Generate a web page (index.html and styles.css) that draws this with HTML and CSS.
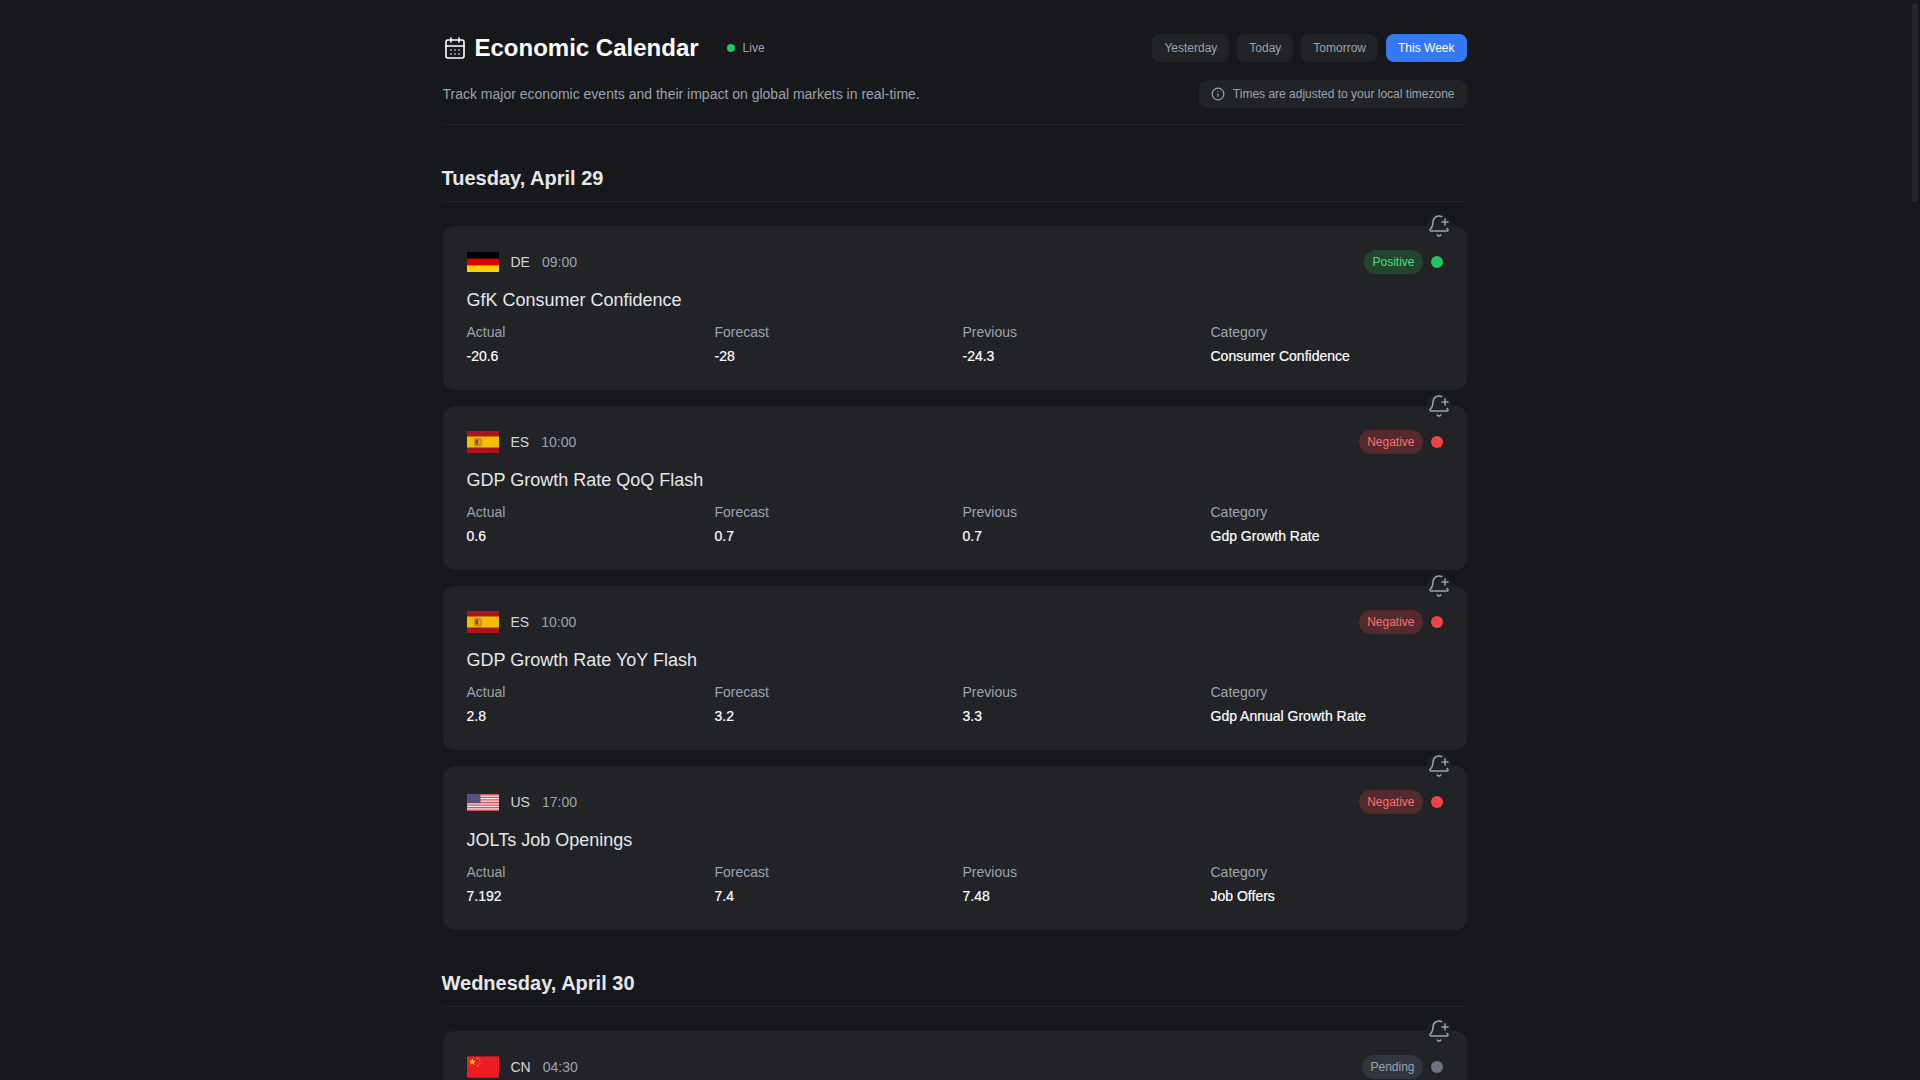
FILE: index.html
```html
<!DOCTYPE html>
<html lang="en">
<head>
<meta charset="utf-8">
<title>Economic Calendar</title>
<link rel="stylesheet" href="styles.css">
</head>
<body>
<svg class="sprites" aria-hidden="true">
  <symbol id="bell" viewBox="0 0 24 24" fill="none" stroke="currentColor" stroke-width="1.5" stroke-linecap="round" stroke-linejoin="round">
    <path d="M10.268 21a2 2 0 0 0 3.464 0"/><path d="M15 8h6"/><path d="M18 5v6"/><path d="M20.002 14.464a9 9 0 0 0 .738.863A1 1 0 0 1 20 17H4a1 1 0 0 1-.74-1.673C4.59 13.956 6 12.499 6 8a6 6 0 0 1 8.75-5.332"/>
  </symbol>
  <symbol id="flag-es" viewBox="0 0 32 22">
    <rect width="32" height="22" fill="#aa151b"/><rect y="5.5" width="32" height="11" fill="#f1bf00"/>
    <rect x="7" y="7" width="8" height="8.5" rx="2.5" fill="#c8872a"/><rect x="8.5" y="8.5" width="2.6" height="5" rx="1" fill="#ad3a22"/><rect x="11.2" y="8.5" width="2.4" height="5" rx="1" fill="#d9a020"/>
  </symbol>
</svg>
<div class="page">
  <main class="wrap">
    <header class="head">
      <div class="head-row">
        <div class="title-group">
          <svg class="cal-icon" viewBox="0 0 24 24" fill="none" stroke="currentColor" stroke-width="1.6" stroke-linecap="round" stroke-linejoin="round">
            <path d="M8 2v4"/><path d="M16 2v4"/><rect width="18" height="18" x="3" y="4" rx="2"/><path d="M3 10h18"/><path d="M8 14h.01"/><path d="M12 14h.01"/><path d="M16 14h.01"/><path d="M8 18h.01"/><path d="M12 18h.01"/><path d="M16 18h.01"/>
          </svg>
          <h1 class="title">Economic Calendar</h1>
          <span class="live"><i class="live-dot"></i>Live</span>
        </div>
        <nav class="tabs">
          <button class="tab">Yesterday</button>
          <button class="tab">Today</button>
          <button class="tab">Tomorrow</button>
          <button class="tab tab-active">This Week</button>
        </nav>
      </div>
      <div class="head-row head-row-second">
        <p class="sub">Track major economic events and their impact on global markets in real-time.</p>
        <div class="tz">
          <svg class="tz-icon" viewBox="0 0 24 24" fill="none" stroke="currentColor" stroke-width="2" stroke-linecap="round" stroke-linejoin="round"><circle cx="12" cy="12" r="10"/><path d="M12 16v-4"/><path d="M12 8h.01"/></svg>
          <span>Times are adjusted to your local timezone</span>
        </div>
      </div>
    </header>

    <section class="day">
      <h2 class="day-title">Tuesday, April 29</h2>
      <div class="cards">
        <article class="card">
          <button class="bell"><svg class="bell-icon"><use href="#bell"/></svg></button>
          <div class="card-top">
            <div class="meta">
              <svg class="flag flag-de" viewBox="0 0 32 20"><rect width="32" height="6.67" fill="#000"/><rect y="6.67" width="32" height="6.67" fill="#d00"/><rect y="13.33" width="32" height="6.67" fill="#ffce00"/></svg>
              <span class="code">DE</span><span class="time">09:00</span>
            </div>
            <div class="status"><span class="badge badge-pos">Positive</span><i class="dot dot-pos"></i></div>
          </div>
          <h3 class="event">GfK Consumer Confidence</h3>
          <dl class="stats">
            <div><dt>Actual</dt><dd>-20.6</dd></div>
            <div><dt>Forecast</dt><dd>-28</dd></div>
            <div><dt>Previous</dt><dd>-24.3</dd></div>
            <div><dt>Category</dt><dd>Consumer Confidence</dd></div>
          </dl>
        </article>

        <article class="card">
          <button class="bell"><svg class="bell-icon"><use href="#bell"/></svg></button>
          <div class="card-top">
            <div class="meta">
              <svg class="flag flag-es"><use href="#flag-es"/></svg>
              <span class="code">ES</span><span class="time">10:00</span>
            </div>
            <div class="status"><span class="badge badge-neg">Negative</span><i class="dot dot-neg"></i></div>
          </div>
          <h3 class="event">GDP Growth Rate QoQ Flash</h3>
          <dl class="stats">
            <div><dt>Actual</dt><dd>0.6</dd></div>
            <div><dt>Forecast</dt><dd>0.7</dd></div>
            <div><dt>Previous</dt><dd>0.7</dd></div>
            <div><dt>Category</dt><dd>Gdp Growth Rate</dd></div>
          </dl>
        </article>

        <article class="card">
          <button class="bell"><svg class="bell-icon"><use href="#bell"/></svg></button>
          <div class="card-top">
            <div class="meta">
              <svg class="flag flag-es"><use href="#flag-es"/></svg>
              <span class="code">ES</span><span class="time">10:00</span>
            </div>
            <div class="status"><span class="badge badge-neg">Negative</span><i class="dot dot-neg"></i></div>
          </div>
          <h3 class="event">GDP Growth Rate YoY Flash</h3>
          <dl class="stats">
            <div><dt>Actual</dt><dd>2.8</dd></div>
            <div><dt>Forecast</dt><dd>3.2</dd></div>
            <div><dt>Previous</dt><dd>3.3</dd></div>
            <div><dt>Category</dt><dd>Gdp Annual Growth Rate</dd></div>
          </dl>
        </article>

        <article class="card">
          <button class="bell"><svg class="bell-icon"><use href="#bell"/></svg></button>
          <div class="card-top">
            <div class="meta">
              <svg class="flag flag-us" viewBox="0 0 38 20">
                <rect width="38" height="20" fill="#f3e4e4"/>
                <path d="M0 .77h38M0 3.85h38M0 6.92h38M0 10h38M0 13.08h38M0 16.15h38M0 19.23h38" stroke="#d4545f" stroke-width="1.54"/>
                <rect width="16" height="10.8" fill="#55507f"/>
              </svg>
              <span class="code">US</span><span class="time">17:00</span>
            </div>
            <div class="status"><span class="badge badge-neg">Negative</span><i class="dot dot-neg"></i></div>
          </div>
          <h3 class="event">JOLTs Job Openings</h3>
          <dl class="stats">
            <div><dt>Actual</dt><dd>7.192</dd></div>
            <div><dt>Forecast</dt><dd>7.4</dd></div>
            <div><dt>Previous</dt><dd>7.48</dd></div>
            <div><dt>Category</dt><dd>Job Offers</dd></div>
          </dl>
        </article>
      </div>
    </section>

    <section class="day">
      <h2 class="day-title">Wednesday, April 30</h2>
      <div class="cards">
        <article class="card">
          <button class="bell"><svg class="bell-icon"><use href="#bell"/></svg></button>
          <div class="card-top">
            <div class="meta">
              <svg class="flag flag-cn" viewBox="0 0 30 20">
                <rect width="30" height="20" fill="#ee1c25"/>
                <polygon fill="#ffde00" points="5,2 5.9,4.1 8,4.3 6.4,5.7 6.9,7.9 5,6.7 3.1,7.9 3.6,5.7 2,4.3 4.1,4.1"/>
                <circle cx="10" cy="2" r=".6" fill="#ffde00"/><circle cx="12" cy="4" r=".6" fill="#ffde00"/><circle cx="12" cy="7" r=".6" fill="#ffde00"/><circle cx="10" cy="9" r=".6" fill="#ffde00"/>
              </svg>
              <span class="code">CN</span><span class="time">04:30</span>
            </div>
            <div class="status"><span class="badge badge-pend">Pending</span><i class="dot dot-pend"></i></div>
          </div>
        </article>
      </div>
    </section>
  </main>
</div>
<div class="scroll-thumb"></div>
</body>
</html>
```

FILE: styles.css
```css
* { box-sizing: border-box; }
html, body { height: 100%; margin: 0; overflow: hidden; }
body {
  background: #16181c;
  color: #e5e7eb;
  font-family: "Liberation Sans", Arial, sans-serif;
}
.sprites { display: none; }
.page { height: 100%; padding-right: 11px; overflow: hidden; }
.wrap { width: 1024px; margin: 0 auto; padding-top: 32px; }

.head { padding-bottom: 16px; border-bottom: 1px solid #212328; }
.head-row { display: flex; align-items: center; justify-content: space-between; }
.head-row-second { margin-top: 16px; }
.title-group { display: flex; align-items: center; height: 32px; }
.cal-icon { width: 24px; height: 24px; color: #fff; }
.title { margin: 0 0 0 8px; font-size: 24px; line-height: 32px; font-weight: 700; color: #fff; }
.live { display: flex; align-items: center; gap: 8px; margin-left: 28px; font-size: 12px; color: #9ca3af; }
.live-dot { width: 8px; height: 8px; border-radius: 50%; background: #22c55e; }
.tabs { display: flex; gap: 8px; }
.tab {
  height: 28px;
  padding: 0 12px;
  border: 0;
  border-radius: 8px;
  background: #212327;
  color: #9ca3af;
  font: 12px/28px "Liberation Sans", Arial, sans-serif;
}
.tab-active { background: #3478f6; color: #fff; }
.sub { margin: 0; font-size: 14px; line-height: 20px; color: #9ca3af; }
.tz {
  display: flex;
  align-items: center;
  gap: 8px;
  height: 28px;
  padding: 0 12px;
  border-radius: 8px;
  background: #212327;
  font-size: 12px;
  color: #9ca3af;
}
.tz-icon { width: 14px; height: 14px; }

.day { margin-top: 39px; }
.day-title {
  margin: 0 0 24px;
  padding-bottom: 9px;
  border-bottom: 1px solid #212328;
  font-size: 20px;
  line-height: 28px;
  font-weight: 700;
  text-indent: -1px;
  color: #e5e7eb;
}
.cards { display: flex; flex-direction: column; gap: 16px; }
.card { position: relative; padding: 24px; border-radius: 12px; background: #212327; }
.bell {
  position: absolute;
  top: -12px;
  right: 16px;
  width: 24px;
  height: 24px;
  padding: 0;
  border: 0;
  border-radius: 50%;
  background: rgba(33, 35, 39, 0.8);
  color: #9ca3af;
}
.bell-icon { display: block; width: 24px; height: 24px; }
.card-top { display: flex; align-items: center; justify-content: space-between; height: 24px; }
.meta { display: flex; align-items: center; gap: 12px; font-size: 14px; }
.flag { display: block; width: 32px; }
.flag-de { height: 20px; }
.flag-es { height: 22px; }
.flag-us { height: 17px; }
.flag-cn { height: 22px; }
.code { color: #d1d5db; }
.time { color: #9ca3af; }
.status { display: flex; align-items: center; gap: 8px; }
.badge { height: 24px; padding: 0 8px; border-radius: 12px; font-size: 12px; line-height: 24px; }
.badge-pos { background: #22452f; color: #4ade80; }
.badge-neg { background: #552a2d; color: #f87171; }
.badge-pend { background: #31353d; color: #9ca3af; }
.dot { width: 12px; height: 12px; border-radius: 50%; }
.dot-pos { background: #22c55e; }
.dot-neg { background: #ef4444; }
.dot-pend { background: #6b7280; }
.event { margin: 12px 0 0; font-size: 18px; line-height: 28px; font-weight: 400; color: #e5e7eb; }
.stats { display: grid; grid-template-columns: repeat(4, 1fr); gap: 16px; margin: 8px 0 0; }
.stats dt { font-size: 14px; line-height: 20px; color: #9ca3af; }
.stats dd { margin: 4px 0 0; font-size: 14px; line-height: 20px; color: #fff; -webkit-text-stroke: 0.2px #fff; }

.scroll-thumb {
  position: fixed;
  top: 3px;
  right: 2px;
  width: 6px;
  height: 199px;
  border-radius: 3px;
  background: #25262f;
}
```
